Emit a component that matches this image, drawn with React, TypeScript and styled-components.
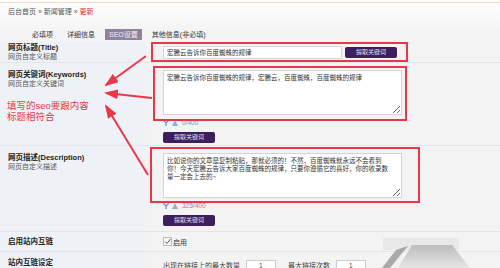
import React from "react"
import styled, { createGlobalStyle } from "styled-components"

const GlobalStyle = createGlobalStyle`
  html, body {
    margin: 0;
    padding: 0;
    background: #f3f3f3;
    overflow: hidden;
  }
  body {
    font-family: "Liberation Sans", "Noto Sans CJK SC", sans-serif;
    font-size: 7px;
    color: #333;
  }
`

type TRow = {
  title: string
  sub?: string
  height: number
  pad?: number
  center?: boolean
  children?: React.ReactNode
}

const Row: React.FC<TRow> = ({ title, sub, height, pad = 7, center, children }) => (
  <RowWrap $h={height}>
    <Label $center={center} $pad={pad}>
      <p className="title">{title}</p>
      {sub && <p className="sub">{sub}</p>}
    </Label>
    <Field>{children}</Field>
  </RowWrap>
)

const Counter: React.FC<{ text: string }> = ({ text }) => (
  <CounterWrap>
    <svg width="16" height="7" viewBox="0 0 16 7">
      <path d="M0 1 L3 4 L6 1 M3 4 L3 7" stroke="#5a8fd0" strokeWidth="1.2" fill="none" />
      <path d="M9 7 L12 1 L15 7 Z" fill="#8bb0e0" />
    </svg>
    <span>{text}</span>
  </CounterWrap>
)

const DESC =
  "比如说你的文章是复制粘贴，那就必须的！不然，百度蜘蛛就永远不会看到\n你！今天宏騰云告诉大家百度蜘蛛的规律，只要你遵循它的喜好，你的收录数\n量一定会上去的~"

const App: React.FC = () => {
  return (
    <Page>
      <GlobalStyle />
      <Crumb>
        后台首页 » 新闻管理 » <span className="current">更新</span>
      </Crumb>
      <Tabs>
        <Tab>必填项</Tab>
        <Tab>详细信息</Tab>
        <Tab $active>SEO设置</Tab>
        <Tab>其他信息(非必填)</Tab>
      </Tabs>
      <Table>
        <Row title="网页标题(Title)" sub="网页自定义标题" height={21} pad={1}>
          <InlineLine>
            <TextInput defaultValue="宏騰云告诉你百度蜘蛛的规律" />
            <PurpleButton>提取关键词</PurpleButton>
          </InlineLine>
        </Row>
        <Row title="网页关键词(Keywords)" sub="网页自定义关键词" height={83}>
          <Stack>
            <Area defaultValue="宏騰云告诉你百度蜘蛛的规律，宏騰云，百度蜘蛛，百度蜘蛛的规律" />
            <Counter text="0/400" />
            <PurpleButton>提取关键词</PurpleButton>
          </Stack>
        </Row>
        <Row title="网页描述(Description)" sub="网页自定义描述" height={86}>
          <Stack>
            <Area defaultValue={DESC} wrap="off" />
            <Counter text="325/400" />
            <PurpleButton>提取关键词</PurpleButton>
          </Stack>
        </Row>
        <Row title="启用站内互链" height={20} center>
          <Check>
            <span className="box">
              <svg width="7" height="7" viewBox="0 0 7 7">
                <path d="M1 3.5 L3 5.5 L6.5 1" stroke="#555" strokeWidth="1" fill="none" />
              </svg>
            </span>
            启用
          </Check>
        </Row>
        <Row title="站内互链设定" height={22} pad={6}>
          <InlineLine className="settings">
            <span>出现在链接上的最大数量</span>
            <SmallBox>1</SmallBox>
            <span className="gap">最大链接次数</span>
            <SmallBox>1</SmallBox>
          </InlineLine>
        </Row>
      </Table>

      <Note>
        <div>填写的seo要跟内容</div>
        <div>标题相符合</div>
      </Note>
      <Mark $x={151} $y={42} $w={257} $h={20} />
      <Mark $x={153} $y={66} $w={254} $h={55} />
      <Mark $x={150} $y={147} $w={270} $h={56} />
      <Arrows width="500" height="268" viewBox="0 0 500 268">
        <defs>
          <marker id="head" markerWidth="7" markerHeight="5" refX="6" refY="2.5" orient="auto">
            <path d="M0 0 L7 2.5 L0 5 Z" fill="#e8374b" />
          </marker>
        </defs>
        <line x1="146" y1="56" x2="106" y2="85" stroke="#e8374b" strokeWidth="2" markerEnd="url(#head)" />
        <line x1="152" y1="98" x2="106" y2="93" stroke="#e8374b" strokeWidth="2" markerEnd="url(#head)" />
        <line x1="148" y1="175" x2="106" y2="106" stroke="#e8374b" strokeWidth="2" markerEnd="url(#head)" />
      </Arrows>
      <Smudge width="500" height="268" viewBox="0 0 500 268">
        <defs>
          <linearGradient id="fade" x1="0" y1="0" x2="0" y2="1">
            <stop offset="0" stopColor="#bdbdbd" />
            <stop offset="1" stopColor="#e6e6e6" />
          </linearGradient>
        </defs>
        <rect x="383" y="238" width="76" height="12" fill="#e8e8e8" />
        <path d="M412 245 L452 245 L470 268 L398 268 Z" fill="url(#fade)" />
        <path d="M396 250 L408 246 L390 268 L382 268 Z" fill="#8a8a8a" opacity="0.7" />
      </Smudge>
    </Page>
  )
}

export default App

const Page = styled.div`
  position: relative;
  width: 500px;
  height: 268px;
  overflow: hidden;
  display: flex;
  flex-direction: column;
  background: linear-gradient(180deg, #ffffff 0%, #f4f4f4 30px, #f2f2f2 100%);
  > * {
    flex-shrink: 0;
  }
`

const Crumb = styled.div`
  height: 20px;
  box-sizing: border-box;
  border-top: 1px solid #f0dcc0;
  margin-top: 2px;
  padding: 4px 8px 0;
  font-size: 7px;
  line-height: 9px;
  color: #555;
  > span.current {
    color: #e53030;
  }
`

const Tabs = styled.div`
  display: flex;
  align-items: center;
  gap: 6px;
  height: 20px;
  padding: 4px 0 0 28px;
  box-sizing: border-box;
`

const Tab = styled.div<{ $active?: boolean }>`
  padding: 1px 4px;
  line-height: 9px;
  font-size: 7px;
  color: ${({ $active }) => ($active ? "#f3eef8" : "#333")};
  background: ${({ $active }) => ($active ? "#8f829f" : "transparent")};
`

const Table = styled.div`
  display: flex;
  flex-direction: column;
`

const RowWrap = styled.div<{ $h: number }>`
  display: grid;
  grid-template-columns: 145px 1fr;
  height: ${({ $h }) => $h}px;
  flex-shrink: 0;
  border-bottom: 1px solid #e2e6ea;
  box-sizing: border-box;
`

const Label = styled.div<{ $center?: boolean; $pad: number }>`
  background: #eef2f6;
  padding: ${({ $center, $pad }) => ($center ? 0 : $pad)}px 0 0 8px;
  display: flex;
  flex-direction: column;
  justify-content: ${({ $center }) => ($center ? "center" : "flex-start")};
  > p {
    margin: 0;
    line-height: 9px;
    font-size: 7.5px;
  }
  > p.title {
    font-weight: 700;
    color: #222;
  }
  > p.sub {
    color: #555;
    font-size: 7px;
  }
`

const Field = styled.div`
  background: #f3f3f3;
  padding-left: 18px;
  display: flex;
  flex-direction: column;
  justify-content: center;
`

const InlineLine = styled.div`
  display: flex;
  align-items: center;
  gap: 3px;
  &.settings {
    gap: 6px;
    margin-top: 4px;
    color: #444;
    > span.gap {
      margin-left: 6px;
    }
  }
`

const TextInput = styled.input`
  width: 179px;
  height: 13px;
  box-sizing: border-box;
  border: 1px solid #d4d4d4;
  background: #fff;
  padding: 0 3px;
  font: inherit;
  font-size: 6.5px;
  color: #333;
  outline: none;
`

const PurpleButton = styled.button`
  width: 52px;
  height: 11px;
  padding: 0;
  border: none;
  border-radius: 2px;
  background: #3e1f5e;
  color: #e8e0f0;
  font: inherit;
  font-size: 6px;
  line-height: 11px;
`

const Stack = styled.div`
  display: flex;
  flex-direction: column;
  align-items: flex-start;
  align-self: stretch;
  padding-top: 7px;
  flex: 1;
  > button {
    margin-top: 5px;
  }
`

const Area = styled.textarea`
  width: 239px;
  height: 45px;
  box-sizing: border-box;
  border: 1px solid #cfd4da;
  background: #fff;
  padding: 2px 3px;
  font: inherit;
  font-family: "Noto Sans CJK SC", sans-serif;
  font-size: 6.5px;
  line-height: 8px;
  color: #333;
  outline: none;
  overflow: hidden;
`

const CounterWrap = styled.div`
  display: flex;
  align-items: center;
  gap: 3px;
  margin-top: 3px;
  height: 9px;
  font-size: 6.5px;
  color: #8a8fa8;
`

const Check = styled.div`
  display: flex;
  align-items: center;
  gap: 1px;
  color: #333;
  > span.box {
    display: flex;
    width: 7px;
    height: 7px;
    border: 1px solid #bbb;
    background: #fafafa;
  }
`

const SmallBox = styled.span`
  display: inline-block;
  width: 30px;
  height: 10px;
  line-height: 10px;
  border: 1px solid #ccc;
  background: #fff;
  padding-left: 12px;
  box-sizing: border-box;
  font-size: 6.5px;
`

const Note = styled.div`
  position: absolute;
  left: 7px;
  top: 100px;
  font-size: 9.5px;
  line-height: 11px;
  color: #e8374b;
  display: flex;
  flex-direction: column;
`

const Mark = styled.div<{ $x: number; $y: number; $w: number; $h: number }>`
  position: absolute;
  left: ${({ $x }) => $x}px;
  top: ${({ $y }) => $y}px;
  width: ${({ $w }) => $w}px;
  height: ${({ $h }) => $h}px;
  box-sizing: border-box;
  border: 2px solid #e8374b;
  pointer-events: none;
`

const Arrows = styled.svg`
  position: absolute;
  left: 0;
  top: 0;
  pointer-events: none;
`

const Smudge = styled.svg`
  position: absolute;
  left: 0;
  top: 0;
  pointer-events: none;
`
